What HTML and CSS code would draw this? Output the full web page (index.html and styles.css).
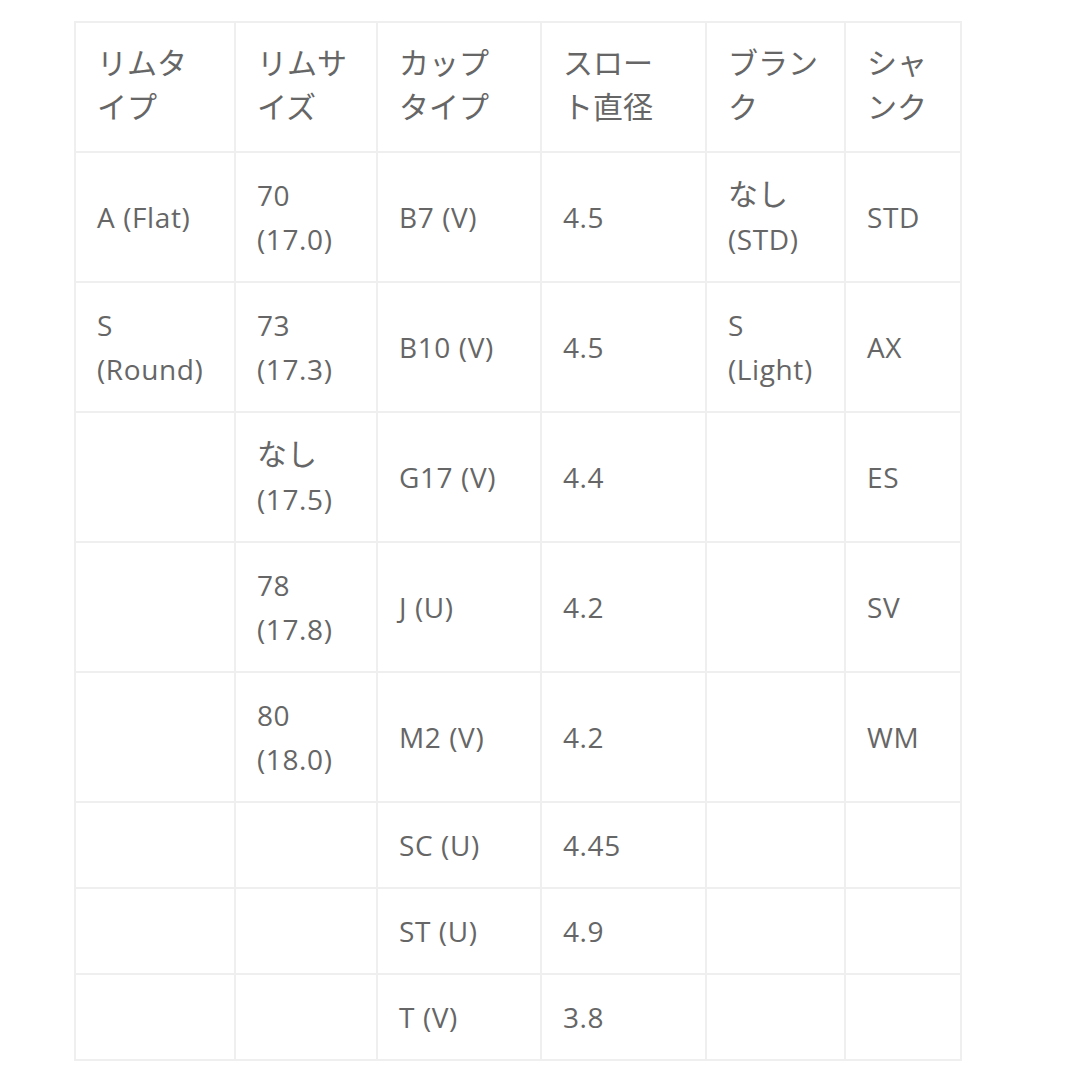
FILE: index.html
```html
<!DOCTYPE html>
<html lang="ja">
<head>
<meta charset="utf-8">
<link rel="stylesheet" href="styles.css">
</head>
<body>
<div class="wrap">
<table class="spec">
<colgroup>
<col class="c1"><col class="c2"><col class="c3"><col class="c4"><col class="c5"><col class="c6">
</colgroup>
<thead>
<tr><th>リムタイプ</th><th>リムサイズ</th><th>カップタイプ</th><th>スロート直径</th><th>ブランク</th><th>シャンク</th></tr>
</thead>
<tbody>
<tr class="tall"><td>A (Flat)</td><td>70<br>(17.0)</td><td>B7 (V)</td><td>4.5</td><td><span class="ja">なし</span><br>(STD)</td><td>STD</td></tr>
<tr class="tall"><td>S<br>(Round)</td><td>73<br>(17.3)</td><td>B10 (V)</td><td>4.5</td><td>S<br>(Light)</td><td>AX</td></tr>
<tr class="tall"><td></td><td><span class="ja">なし</span><br>(17.5)</td><td>G17 (V)</td><td>4.4</td><td></td><td>ES</td></tr>
<tr class="tall"><td></td><td>78<br>(17.8)</td><td>J (U)</td><td>4.2</td><td></td><td>SV</td></tr>
<tr class="tall"><td></td><td>80<br>(18.0)</td><td>M2 (V)</td><td>4.2</td><td></td><td>WM</td></tr>
<tr><td></td><td></td><td>SC (U)</td><td>4.45</td><td></td><td></td></tr>
<tr><td></td><td></td><td>ST (U)</td><td>4.9</td><td></td><td></td></tr>
<tr><td></td><td></td><td>T (V)</td><td>3.8</td><td></td><td></td></tr>
</tbody>
</table>
</div>
</body>
</html>
```

FILE: styles.css
```css
html, body {
  margin: 0;
  padding: 0;
  background: #ffffff;
}
.wrap {
  padding: 21px 0 0 74px;
}
.spec {
  border-collapse: collapse;
  table-layout: fixed;
  width: 886px;
  font-family: "Open Sans", "Noto Sans CJK JP", sans-serif;
  font-size: 28px;
  letter-spacing: 0.6px;
  line-height: 44px;
  color: #666666;
}
.c1 { width: 160px; }
.c2 { width: 142px; }
.c3 { width: 164px; }
.c4 { width: 165px; }
.c5 { width: 139px; }
.c6 { width: 116px; }
.spec th,
.spec td {
  border: 2px solid #efefef;
  padding: 20px 22px 20px 21px;
  text-align: left;
  vertical-align: middle;
  font-weight: normal;
  word-break: break-all;
  overflow: hidden;
}
.spec th {
  vertical-align: top;
  padding-top: 16px;
  padding-right: 24px;
  font-size: 30px;
  letter-spacing: 0;
  font-family: "Noto Sans CJK JP", sans-serif;
}
.ja {
  font-family: "Noto Sans CJK JP", sans-serif;
  font-size: 30px;
  letter-spacing: 0;
  line-height: 38px;
  vertical-align: top;
}
.spec thead tr { height: 130px; }
.spec tbody tr { height: 86px; }
.spec tbody tr.tall { height: 130px; }
```
